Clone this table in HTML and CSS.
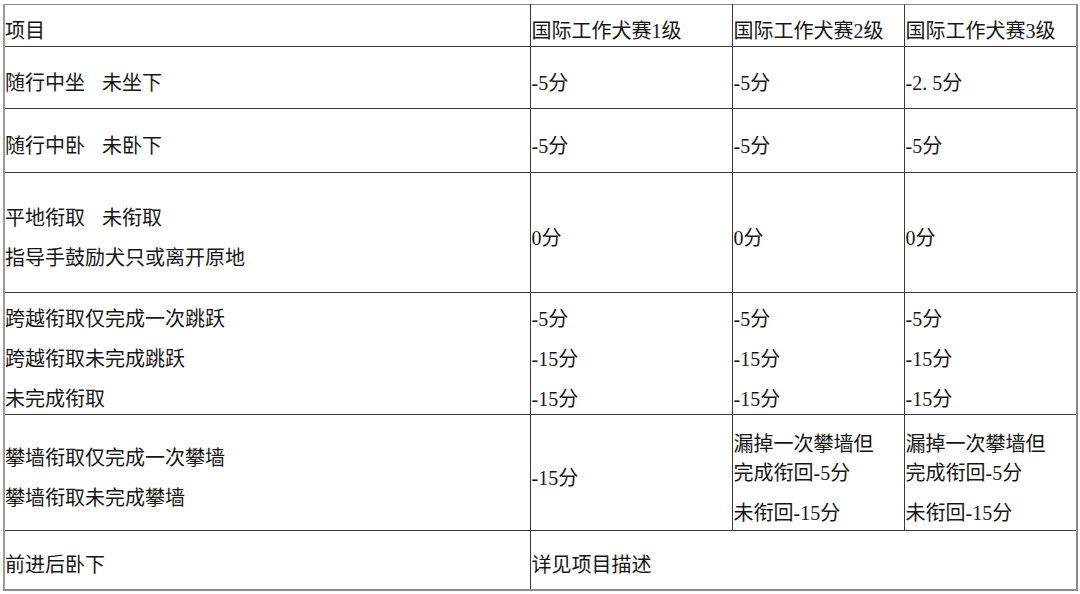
FILE: index.html
```html
<!DOCTYPE html>
<html lang="zh-CN">
<head>
<meta charset="utf-8">
<title>国际工作犬赛扣分表</title>
<link rel="stylesheet" href="styles.css">
</head>
<body>
<table class="score">
  <colgroup>
    <col class="c1"><col class="c2"><col class="c3"><col class="c4">
  </colgroup>
  <tr class="r-head">
    <td><p>项目</p></td>
    <td><p>国际工作犬赛1级</p></td>
    <td><p>国际工作犬赛2级</p></td>
    <td><p>国际工作犬赛3级</p></td>
  </tr>
  <tr class="r1">
    <td><p>随行中坐<span class="gap"> </span>未坐下</p></td>
    <td><p>-5分</p></td>
    <td><p>-5分</p></td>
    <td><p>-2.&nbsp;5分</p></td>
  </tr>
  <tr class="r2">
    <td><p>随行中卧<span class="gap"> </span>未卧下</p></td>
    <td><p>-5分</p></td>
    <td><p>-5分</p></td>
    <td><p>-5分</p></td>
  </tr>
  <tr class="r3">
    <td><p>平地衔取<span class="gap"> </span>未衔取</p><p>指导手鼓励犬只或离开原地</p></td>
    <td><p>0分</p></td>
    <td><p>0分</p></td>
    <td><p>0分</p></td>
  </tr>
  <tr class="r4">
    <td><p>跨越衔取仅完成一次跳跃</p><p>跨越衔取未完成跳跃</p><p>未完成衔取</p></td>
    <td><p>-5分</p><p>-15分</p><p>-15分</p></td>
    <td><p>-5分</p><p>-15分</p><p>-15分</p></td>
    <td><p>-5分</p><p>-15分</p><p>-15分</p></td>
  </tr>
  <tr class="r5">
    <td><p>攀墙衔取仅完成一次攀墙</p><p>攀墙衔取未完成攀墙</p></td>
    <td><p>-15分</p></td>
    <td><p>漏掉一次攀墙但<br>完成衔回-5分</p><p>未衔回-15分</p></td>
    <td><p>漏掉一次攀墙但<br>完成衔回-5分</p><p>未衔回-15分</p></td>
  </tr>
  <tr class="r6">
    <td><p>前进后卧下</p></td>
    <td colspan="3"><p>详见项目描述</p></td>
  </tr>
</table>
</body>
</html>
```

FILE: styles.css
```css
html, body {
  margin: 0;
  padding: 0;
  background: #ffffff;
}

body {
  font-family: "Liberation Serif", "Noto Sans CJK SC", serif;
  font-size: 20px;
  color: #161616;
}

.score {
  border-collapse: collapse;
  margin: 4px 0 0 3px;
  width: 1073px;
  table-layout: fixed;
  border-top: 1px solid #8a8a8a;
  border-left: 2px solid #9a9a9a;
  border-right: 2px solid #8a8a8a;
  border-bottom: 2px solid #8a8a8a;
}

.c1 { width: 526px; }
.c2 { width: 202px; }
.c3 { width: 172px; }
.c4 { width: 173px; }

.score td {
  border: 1px solid #3a3a3a;
  padding: 12px 0 0 1px;
  vertical-align: middle;
  white-space: nowrap;
}

.score tr > td:first-child {
  border-left: 2px solid #9a9a9a;
  padding-left: 0;
}

.score tr > td:last-child {
  border-right: 2px solid #8a8a8a;
}

.score tr:first-child > td {
  border-top: 1px solid #8a8a8a;
}

.score tr:last-child > td {
  border-bottom: 2px solid #8a8a8a;
}

.score p {
  margin: 0;
  line-height: 29px;
}

.score p + p {
  margin-top: 11px;
}

.gap {
  display: inline-block;
  width: 17px;
}

.r-head { height: 42px; }
.r1 { height: 62px; }
.r2 { height: 64px; }
.r3 { height: 120px; }
.r4 { height: 122px; }
.r5 { height: 116px; }
.r6 { height: 59px; }
```
